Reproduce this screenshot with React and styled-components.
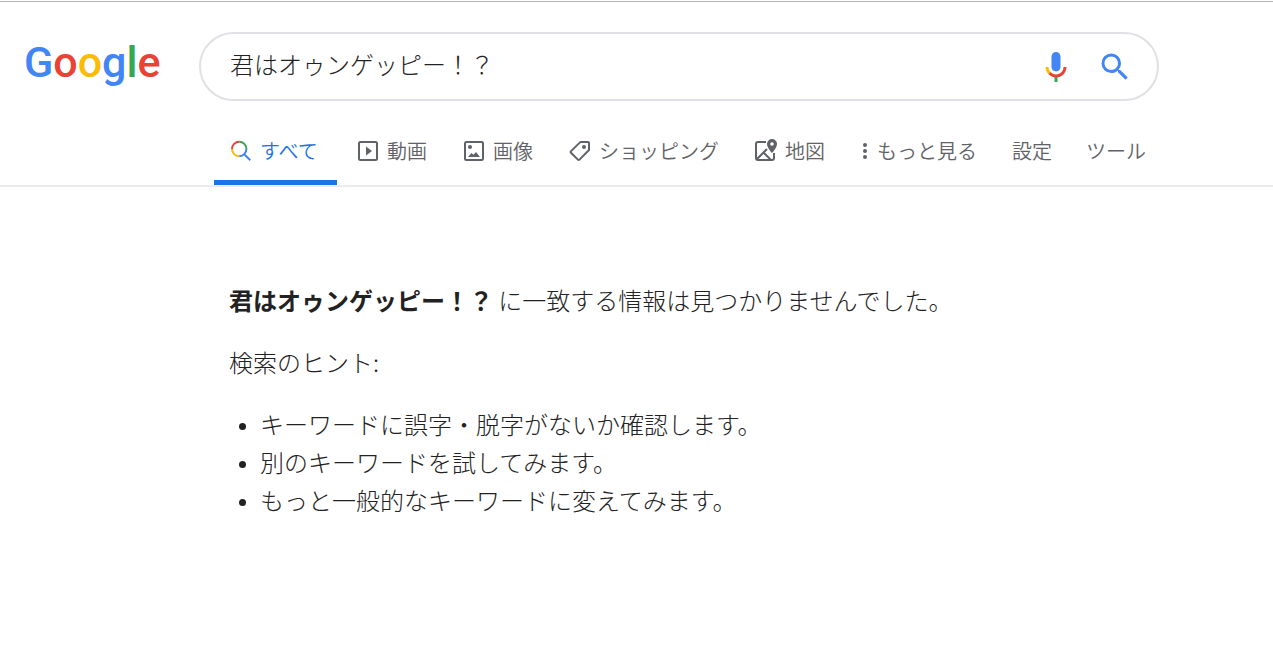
import React from "react";
import styled, { createGlobalStyle, css } from "styled-components";

const GlobalStyle = createGlobalStyle`
  * { box-sizing: border-box; }
  body {
    margin: 0;
    background: #fff;
    color: #222;
    font-family: "Noto Sans CJK JP", sans-serif;
    font-weight: 300;
  }
`;

const Header = styled.header`
  border-bottom: 2px solid #ebebeb;
`;

const TopRule = styled.div`
  height: 2px;
  border-bottom: 1px solid #b4b4b4;
`;

const SearchRow = styled.div`
  display: flex;
  align-items: flex-start;
  padding: 30px 24px 0 24px;
`;

const LogoLink = styled.a`
  flex: none;
  width: 175px;
  font-family: Roboto, sans-serif;
  font-size: 43px;
  font-weight: 500;
  line-height: 60px;
  text-decoration: none;
`;

const LogoLetter = styled.span`
  color: ${(p) => p.$color};
`;

const SearchForm = styled.form`
  display: flex;
  align-items: center;
  flex: 1;
  max-width: 960px;
  height: 69px;
  padding: 0 24px 0 29px;
  border: 2px solid #dfe1e5;
  border-radius: 35px;
`;

const SearchInput = styled.input`
  flex: 1;
  min-width: 0;
  padding: 0 0 6px;
  border: 0;
  outline: 0;
  background: transparent;
  color: #222;
  font: inherit;
  font-size: 24px;
`;

const IconButton = styled.button`
  display: flex;
  padding: 0;
  border: 0;
  background: none;
  margin-left: ${(p) => p.$space || 0}px;
`;

const Nav = styled.nav`
  display: flex;
  gap: 4px;
  padding: 17px 0 0 214px;
  font-weight: 350;
`;

const tabStyle = css`
  display: flex;
  align-items: center;
  height: 67px;
  padding: 4px 16px 0;
  border: 0;
  border-bottom: 5px solid ${(p) => (p.$active ? "#1a73e8" : "transparent")};
  background: none;
  color: ${(p) => (p.$active ? "#1a73e8" : "#5f6368")};
  font: inherit;
  font-size: 20px;
  line-height: 30px;
  text-decoration: none;
  white-space: nowrap;
`;

const Tab = styled.a`
  ${tabStyle}
  gap: 8px;
  min-width: ${(p) => (p.$active ? 123 : 0)}px;
`;

const TabButton = styled.button`
  ${tabStyle}
  padding: 4px 15px 0;
`;

const Results = styled.main`
  padding: 94px 24px 24px 229px;
  font-size: 24px;
  line-height: 38px;
`;

const Message = styled.p`
  margin: 0 0 24px;
`;

const Query = styled.b`
  font-weight: 700;
`;

const Tips = styled.ul`
  margin: 0;
  padding: 0 0 0 10px;
  list-style: none;
`;

const Tip = styled.li`
  display: flex;
  gap: 14px;

  &::before {
    content: "";
    flex: none;
    width: 7px;
    height: 7px;
    margin-top: 18px;
    border-radius: 50%;
    background: #222;
  }
`;

const logoLetters = [
  ["G", "#4285f4"],
  ["o", "#ea4335"],
  ["o", "#fbbc05"],
  ["g", "#4285f4"],
  ["l", "#34a853"],
  ["e", "#ea4335"],
];

function MicIcon() {
  return (
    <svg width="36" height="36" viewBox="0 0 24 24" aria-hidden="true">
      <path fill="#4285f4" d="M12 15c1.66 0 3-1.31 3-2.97V5c0-1.66-1.34-3-3-3S9 3.34 9 5v7.03C9 13.69 10.34 15 12 15z" />
      <path fill="#34a853" d="M11 18.08h2V22h-2z" />
      <path fill="#fbbc05" d="M7.05 16.87C5.78 15.59 5 13.8 5 12h2c0 1.45.56 2.42 1.47 3.38v.32l-1.15 1.18z" />
      <path fill="#ea4335" d="M12 16.93c-1.49 0-2.66-.6-3.57-1.55l-1.38 1.49C8.31 18.17 9.98 19 11.99 19 15.87 19 19 15.87 19 12h-2c0 2.92-2.24 4.93-5 4.93z" />
    </svg>
  );
}

function SearchIcon() {
  return (
    <svg width="36" height="36" viewBox="0 0 24 24" aria-hidden="true">
      <path fill="#4285f4" d="M15.5 14h-.79l-.28-.27A6.47 6.47 0 0 0 16 9.5 6.5 6.5 0 1 0 9.5 16c1.61 0 3.09-.59 4.23-1.57l.27.28v.79l5 4.99L20.49 19l-4.99-5zm-6 0C7.01 14 5 11.99 5 9.5S7.01 5 9.5 5 14 7.01 14 9.5 11.99 14 9.5 14z" />
    </svg>
  );
}

function AllIcon() {
  return (
    <svg width="22" height="22" viewBox="0 0 22 22" fill="none" strokeWidth="2" aria-hidden="true">
      <path stroke="#ea4335" d="M2 9A7.2 7.2 0 0 1 9.2 1.8" />
      <path stroke="#34a853" d="M9.2 1.8A7.2 7.2 0 0 1 16.4 9" />
      <path stroke="#4285f4" d="M16.4 9A7.2 7.2 0 0 1 9.2 16.2M14 14L20.3 20.3" />
      <path stroke="#fbbc05" d="M9.2 16.2A7.2 7.2 0 0 1 2 9" />
    </svg>
  );
}

function VideoIcon() {
  return (
    <svg width="22" height="22" viewBox="0 0 22 22" aria-hidden="true">
      <rect x="2" y="2" width="18" height="18" rx="1.5" fill="none" stroke="#5f6368" strokeWidth="2" />
      <path fill="#5f6368" d="M9 6.5v9l6-4.5z" />
    </svg>
  );
}

function ImageIcon() {
  return (
    <svg width="22" height="22" viewBox="0 0 22 22" aria-hidden="true">
      <rect x="2" y="2" width="18" height="18" rx="1.5" fill="none" stroke="#5f6368" strokeWidth="2" />
      <circle cx="7" cy="7" r="2" fill="#5f6368" />
      <path fill="#5f6368" d="M5 17l3.5-4 2 1.8 2.5-2.8L17 17z" />
    </svg>
  );
}

function TagIcon() {
  return (
    <svg width="22" height="22" viewBox="0 0 22 22" aria-hidden="true">
      <path fill="none" stroke="#5f6368" strokeWidth="2" strokeLinejoin="round" d="M12 2H19Q20 2 20 3V10L10.5 19.6Q9.7 20.4 8.9 19.6L2 12.7Q1.2 11.9 2 11.1L11 2.4Q11.4 2 12 2z" />
      <circle cx="15" cy="7" r="2" fill="#5f6368" />
    </svg>
  );
}

function MapIcon() {
  return (
    <svg width="22" height="24" viewBox="1 0 22 24" aria-hidden="true">
      <path fill="none" stroke="#5f6368" strokeWidth="2" strokeLinejoin="round" d="M12 3H4Q2 3 2 5V19Q2 21 4 21H18Q20 21 20 19V14M3 20L13 10M9.5 13.5L17 21" />
      <path fill="#5f6368" fillRule="evenodd" d="M18 0a5 5 0 0 0-5 5c0 3.8 5 9 5 9s5-5.2 5-9a5 5 0 0 0-5-5zm0 3.2a1.8 1.8 0 1 1 0 3.6 1.8 1.8 0 0 1 0-3.6z" />
    </svg>
  );
}

function MoreIcon() {
  return (
    <svg width="8" height="20" viewBox="0 0 8 20" fill="#5f6368" aria-hidden="true">
      <circle cx="4" cy="4" r="2" />
      <circle cx="4" cy="10" r="2" />
      <circle cx="4" cy="16" r="2" />
    </svg>
  );
}

const tabs = [
  { label: "すべて", Icon: AllIcon, active: true },
  { label: "動画", Icon: VideoIcon },
  { label: "画像", Icon: ImageIcon },
  { label: "ショッピング", Icon: TagIcon },
  { label: "地図", Icon: MapIcon },
  { label: "もっと見る", Icon: MoreIcon },
];

const tips = [
  "キーワードに誤字・脱字がないか確認します。",
  "別のキーワードを試してみます。",
  "もっと一般的なキーワードに変えてみます。",
];

export default function App() {
  return (
    <>
      <GlobalStyle />
      <TopRule />
      <Header>
        <SearchRow>
          <LogoLink href="#" aria-label="Google">
            {logoLetters.map(([letter, color], i) => (
              <LogoLetter key={i} $color={color}>{letter}</LogoLetter>
            ))}
          </LogoLink>
          <SearchForm role="search" onSubmit={(e) => e.preventDefault()}>
            <SearchInput aria-label="検索" defaultValue="君はオゥンゲッピー！？" />
            <IconButton type="button" aria-label="音声検索">
              <MicIcon />
            </IconButton>
            <IconButton type="submit" aria-label="Google 検索" $space={23}>
              <SearchIcon />
            </IconButton>
          </SearchForm>
        </SearchRow>
        <Nav>
          {tabs.map(({ label, Icon, active }) => (
            <Tab key={label} href="#" $active={active} aria-current={active ? "page" : undefined}>
              <Icon />
              {label}
            </Tab>
          ))}
          <TabButton type="button">設定</TabButton>
          <TabButton type="button">ツール</TabButton>
        </Nav>
      </Header>
      <Results>
        <Message>
          <Query>君はオゥンゲッピー！？</Query> に一致する情報は見つかりませんでした。
        </Message>
        <Message>検索のヒント:</Message>
        <Tips>
          {tips.map((tip) => (
            <Tip key={tip}>{tip}</Tip>
          ))}
        </Tips>
      </Results>
    </>
  );
}
